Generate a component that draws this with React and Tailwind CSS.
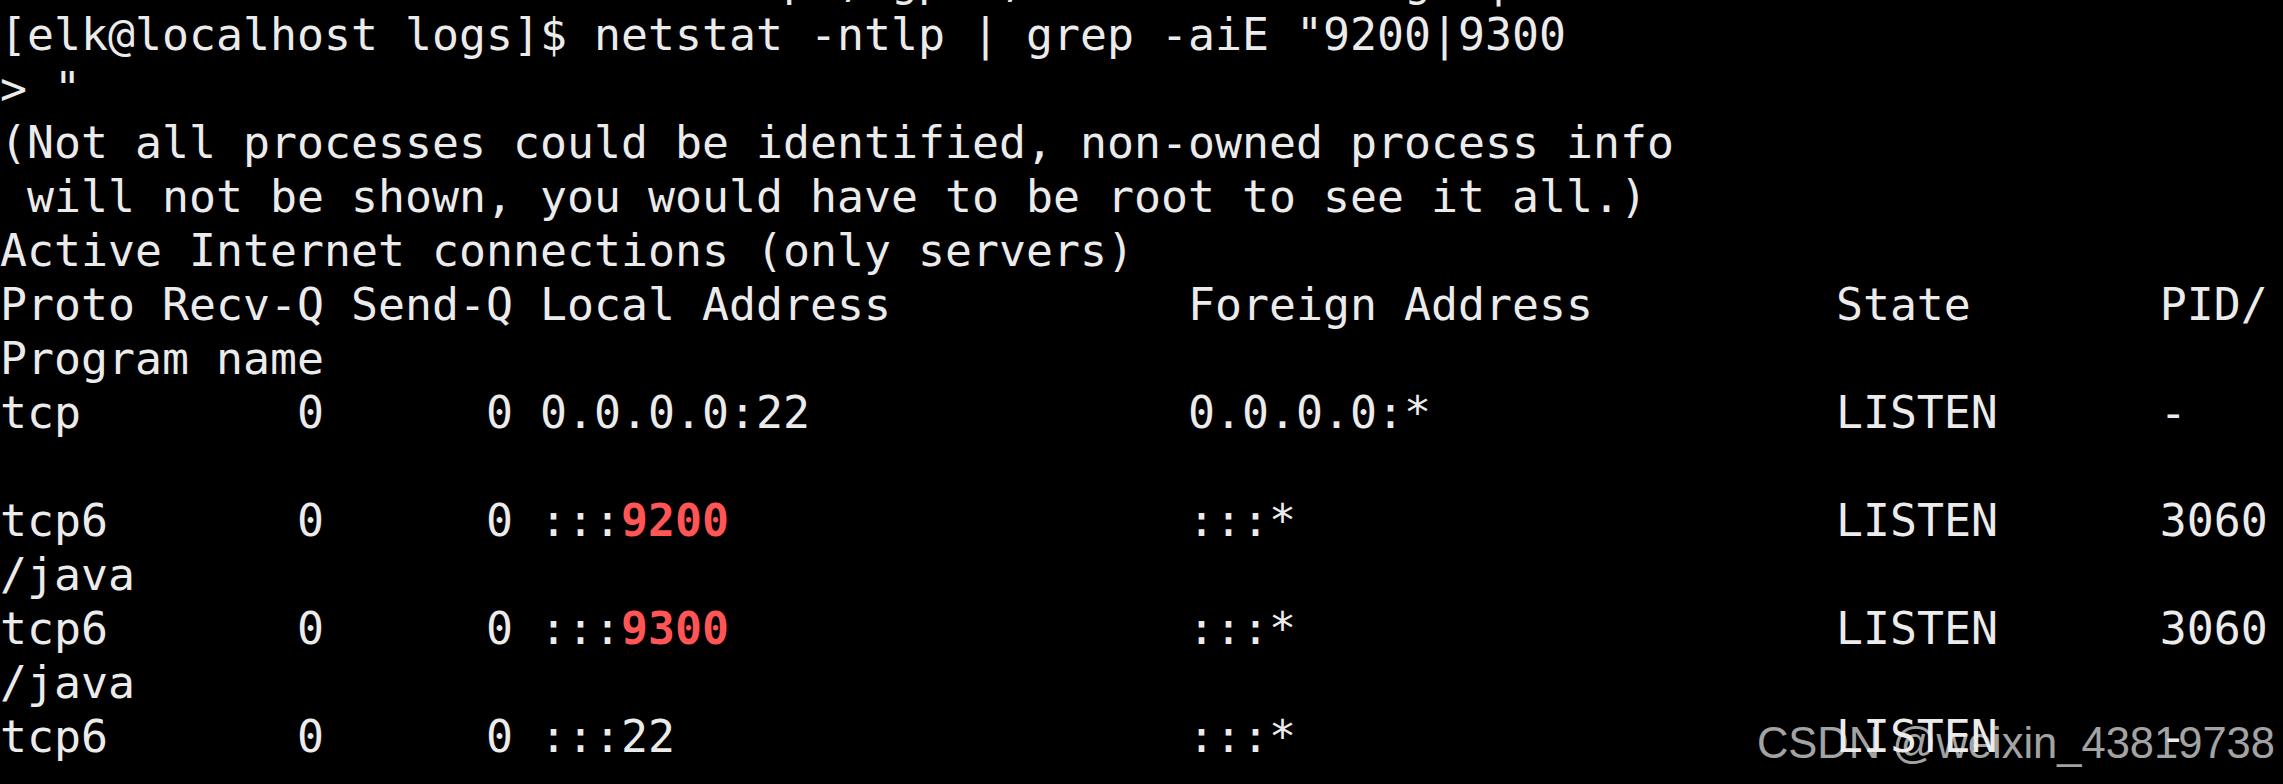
import React from 'react';

const W = 'text-[#ebebeb]';

// each line is a list of [text, red?] segments
const lines = [
  [['                             p , gp  ,              g  |', false]],
  [['[elk@localhost logs]$ netstat -ntlp | grep -aiE "9200|9300', false]],
  [['> "', false]],
  [['(Not all processes could be identified, non-owned process info', false]],
  [[' will not be shown, you would have to be root to see it all.)', false]],
  [['Active Internet connections (only servers)', false]],
  [['Proto Recv-Q Send-Q Local Address           Foreign Address         State       PID/', false]],
  [['Program name', false]],
  [['tcp        0      0 0.0.0.0:22              0.0.0.0:*               LISTEN      -', false]],
  [[' ', false]],
  [
    ['tcp6       0      0 :::', false],
    ['9200', true],
    ['                 :::*                    LISTEN      3060', false],
  ],
  [['/java', false]],
  [
    ['tcp6       0      0 :::', false],
    ['9300', true],
    ['                 :::*                    LISTEN      3060', false],
  ],
  [['/java', false]],
  [['tcp6       0      0 :::22                   :::*                    LISTEN      -', false]],
];

function TerminalLine({ segments }) {
  return (
    <div className="whitespace-pre h-[54px]">
      {segments.map(([text, red], i) =>
        red ? (
          <span key={i} className="text-[#ff5555] font-bold">{text}</span>
        ) : (
          <span key={i}>{text}</span>
        )
      )}
    </div>
  );
}

export default function App() {
  return (
    <div className="relative w-[2283px] h-[784px] bg-black overflow-hidden">
      <div className={`mt-[-46px] font-['DejaVu_Sans_Mono',monospace] text-[44.85px] leading-[54px] ${W}`}>
        {lines.map((segs, i) => (
          <TerminalLine key={i} segments={segs} />
        ))}
      </div>

      <div className="absolute right-[8px] top-[722px] font-['Liberation_Sans',Arial,sans-serif] text-[43.5px] leading-none text-[#eeeeee]/70 whitespace-pre">
        CSDN @weixin_43819738
      </div>
    </div>
  );
}
